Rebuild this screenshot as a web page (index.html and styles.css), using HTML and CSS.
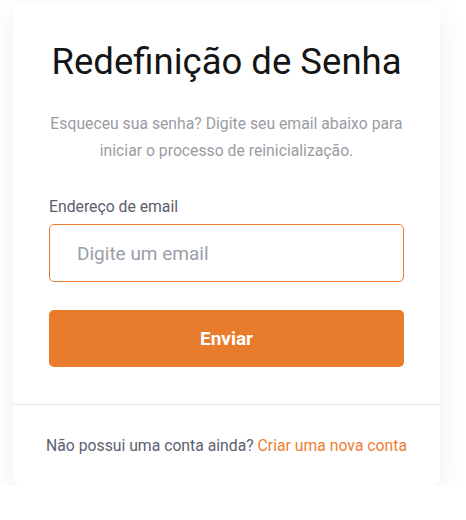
FILE: index.html
```html
<!DOCTYPE html>
<html lang="pt-BR">
<head>
    <meta charset="UTF-8">
    <meta name="viewport" content="width=device-width, initial-scale=1.0">
    <title>Redefinição de Senha</title>
    <link rel="stylesheet" href="styles.css">
</head>
<body>
    <div class="card">
        <div class="card-body">
            <h1 class="title">Redefinição de Senha</h1>
            <p class="subtitle">Esqueceu sua senha? Digite seu email abaixo para iniciar o processo de reinicialização.</p>
            <form class="reset-form">
                <label for="email">Endereço de email</label>
                <input type="email" id="email" placeholder="Digite um email">
                <button type="submit" class="btn-send">Enviar</button>
            </form>
        </div>
        <div class="card-footer">
            Não possui uma conta ainda? <a href="#">Criar uma nova conta</a>
        </div>
    </div>
</body>
</html>
```

FILE: styles.css
```css
body {
    margin: 0;
    padding: 3px 0 0 13px;
    background-color: #ffffff;
    font-family: Roboto, "Liberation Sans", sans-serif;
}

.card {
    width: 427px;
    background-color: white;
    border-radius: 10px;
    box-shadow: 0 8px 28px rgba(0, 0, 0, 0.07);
}

.card-body {
    padding: 36px 36px 37px;
}

.title {
    margin: 0;
    font-size: 36.5px;
    font-weight: 400;
    color: #151515;
    text-align: center;
    line-height: 46px;
}

.subtitle {
    margin: 25px 0 0;
    font-size: 15.75px;
    line-height: 27px;
    color: #9b9ca3;
    text-align: center;
}

.reset-form {
    display: flex;
    flex-direction: column;
    margin-top: 32px;
}

.reset-form label {
    font-size: 15.75px;
    color: #5b5d6b;
    line-height: 22px;
    margin-bottom: 6px;
}

.reset-form input {
    height: 58px;
    box-sizing: border-box;
    padding: 0 27px;
    border: 1px solid #e87b2c;
    border-radius: 5px;
    font-family: inherit;
    font-size: 19px;
    color: #333;
    outline: none;
}

.reset-form input::placeholder {
    color: #9a9ea8;
}

.btn-send {
    margin-top: 28px;
    height: 57px;
    background-color: #e87b2c;
    color: white;
    border: none;
    border-radius: 5px;
    font-family: inherit;
    font-size: 19px;
    font-weight: 700;
    cursor: pointer;
}

.card-footer {
    border-top: 1px solid #e9eaec;
    padding: 30px 0 29px;
    text-align: center;
    font-size: 15.75px;
    line-height: 22px;
    color: #5b5f70;
}

.card-footer a {
    color: #f07c32;
    text-decoration: none;
}
```
